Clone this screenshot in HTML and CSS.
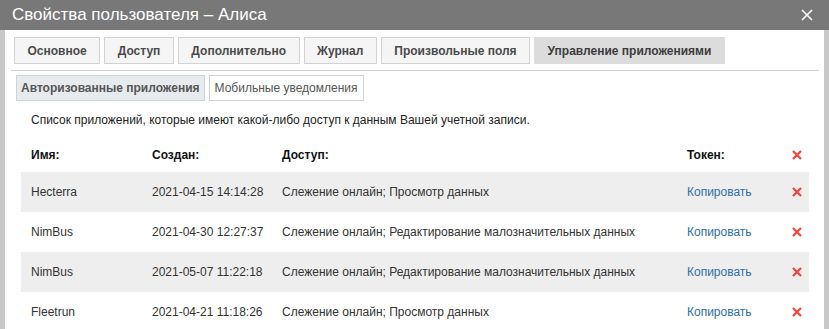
FILE: index.html
```html
<!DOCTYPE html>
<html lang="ru">
<head>
    <meta charset="UTF-8">
    <meta name="viewport" content="width=device-width, initial-scale=1.0">
    <title>Свойства пользователя</title>
    <link rel="stylesheet" href="styles.css">
</head>
<body>
    <div class="dialog">
        <div class="dialog-head">
            <span class="dialog-title">Свойства пользователя – Алиса</span>
            <svg class="close" width="12" height="12" viewBox="0 0 12 12">
                <path d="M1 1 L11 11 M11 1 L1 11" stroke="#fff" stroke-width="1.6" fill="none"/>
            </svg>
        </div>
        <div class="dialog-body">
            <div class="tabs">
                <div class="tab">Основное</div>
                <div class="tab">Доступ</div>
                <div class="tab">Дополнительно</div>
                <div class="tab">Журнал</div>
                <div class="tab">Произвольные поля</div>
                <div class="tab active">Управление приложениями</div>
            </div>
            <div class="subtabs">
                <div class="subtab active">Авторизованные приложения</div>
                <div class="subtab">Мобильные уведомления</div>
            </div>
            <div class="content">
                <p class="hint">Список приложений, которые имеют какой-либо доступ к данным Вашей учетной записи.</p>
                <table class="apps">
                    <colgroup>
                        <col class="c-name">
                        <col class="c-date">
                        <col class="c-access">
                        <col class="c-token">
                        <col class="c-del">
                    </colgroup>
                    <thead>
                        <tr>
                            <th>Имя:</th>
                            <th>Создан:</th>
                            <th>Доступ:</th>
                            <th>Токен:</th>
                            <th><svg class="del" width="10" height="10" viewBox="0 0 10 10"><path d="M1 1 L9 9 M9 1 L1 9"/></svg></th>
                        </tr>
                    </thead>
                    <tbody>
                        <tr>
                            <td>Hecterra</td>
                            <td>2021-04-15 14:14:28</td>
                            <td>Слежение онлайн; Просмотр данных</td>
                            <td><a href="#" class="copy">Копировать</a></td>
                            <td><svg class="del" width="10" height="10" viewBox="0 0 10 10"><path d="M1 1 L9 9 M9 1 L1 9"/></svg></td>
                        </tr>
                        <tr>
                            <td>NimBus</td>
                            <td>2021-04-30 12:27:37</td>
                            <td>Слежение онлайн; Редактирование малозначительных данных</td>
                            <td><a href="#" class="copy">Копировать</a></td>
                            <td><svg class="del" width="10" height="10" viewBox="0 0 10 10"><path d="M1 1 L9 9 M9 1 L1 9"/></svg></td>
                        </tr>
                        <tr>
                            <td>NimBus</td>
                            <td>2021-05-07 11:22:18</td>
                            <td>Слежение онлайн; Редактирование малозначительных данных</td>
                            <td><a href="#" class="copy">Копировать</a></td>
                            <td><svg class="del" width="10" height="10" viewBox="0 0 10 10"><path d="M1 1 L9 9 M9 1 L1 9"/></svg></td>
                        </tr>
                        <tr>
                            <td>Fleetrun</td>
                            <td>2021-04-21 11:18:26</td>
                            <td>Слежение онлайн; Просмотр данных</td>
                            <td><a href="#" class="copy">Копировать</a></td>
                            <td><svg class="del" width="10" height="10" viewBox="0 0 10 10"><path d="M1 1 L9 9 M9 1 L1 9"/></svg></td>
                        </tr>
                    </tbody>
                </table>
            </div>
        </div>
    </div>
</body>
</html>
```

FILE: styles.css
```css
body {
    margin: 0;
    padding: 0;
    font-family: "Liberation Sans", Arial, sans-serif;
    font-size: 12px;
    color: #222;
    background-color: #fff;
}
.dialog {
    width: 829px;
    height: 329px;
    overflow: hidden;
}
.dialog-head {
    height: 30px;
    background-color: #787878;
    display: flex;
    align-items: center;
    justify-content: space-between;
    padding: 0 16px 0 12px;
}
.dialog-title {
    color: #fff;
    font-size: 17px;
}
.close {
    display: block;
}
.dialog-body {
    height: 299px;
    border-left: 5px solid #c8c8c8;
    border-right: 5px solid #c8c8c8;
    padding: 7px 5px 0 6px;
    box-sizing: border-box;
}
.tabs {
    display: flex;
    gap: 4px;
    padding: 0 0 6px 3px;
    border-bottom: 1px solid #d2d2d2;
}
.tab {
    height: 27px;
    box-sizing: border-box;
    padding: 0 12.5px;
    display: flex;
    align-items: center;
    font-weight: bold;
    color: #4a4a4a;
    background-color: #f5f5f5;
    border: 1px solid #d2d2d2;
}
.tab.active {
    background-color: #dcdcdc;
    border-color: #dcdcdc;
    color: #3c3c3c;
}
.subtabs {
    display: flex;
    gap: 4px;
    margin: 4px 0 0 5px;
}
.subtab {
    height: 26px;
    box-sizing: border-box;
    padding: 0 5px;
    display: flex;
    align-items: center;
    color: #555;
    background-color: #fff;
    border: 1px solid #d2d2d2;
}
.subtab.active {
    font-weight: bold;
    padding: 0 4px;
    background-color: #e8ebee;
}
.content {
    padding: 0 10px;
}
.hint {
    margin: 11px 0 0 10px;
    line-height: 16px;
}
.apps {
    width: 100%;
    border-collapse: collapse;
    table-layout: fixed;
    margin-top: 8px;
}
.c-name { width: 121px; }
.c-date { width: 130px; }
.c-access { width: 405px; }
.c-token { width: 105px; }
.apps th,
.apps td {
    padding: 0 0 0 10px;
    text-align: left;
    white-space: nowrap;
}
.apps th {
    height: 34px;
    color: #111;
    padding-top: 2px;
}
.apps td {
    height: 40px;
    color: #333;
}
.apps tbody tr:nth-child(odd) {
    background-color: #eeeeee;
}
.copy {
    color: #2b70aa;
    text-decoration: none;
}
.del {
    display: block;
    stroke: #f0433b;
    stroke-width: 2.2;
    fill: none;
}
```
